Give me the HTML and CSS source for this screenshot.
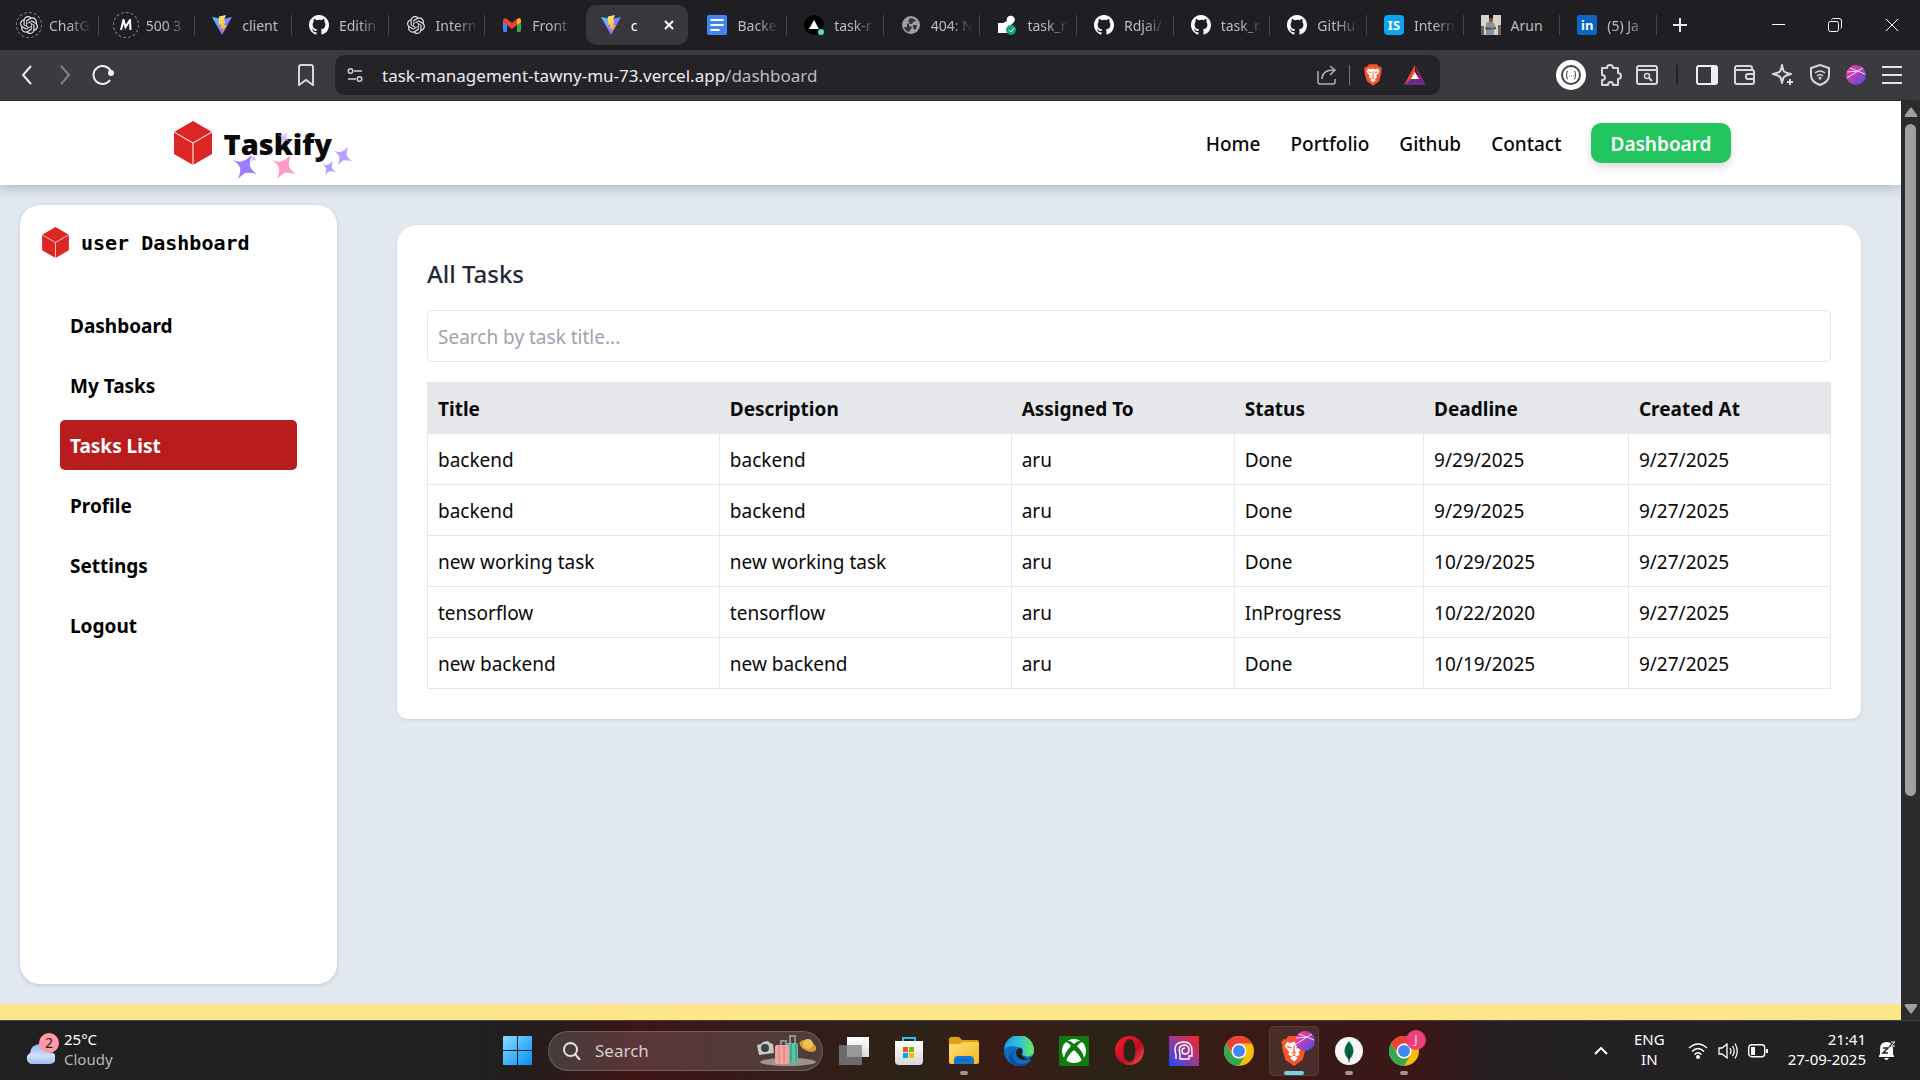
FILE: index.html
```html
<!DOCTYPE html>
<html lang="en">
<head>
<meta charset="utf-8">
<title>client</title>
<link rel="stylesheet" href="styles.css">
</head>
<body>
<svg class="defs" width="0" height="0" aria-hidden="true">
  <defs>
    <linearGradient id="g-vite" x1="0" y1="0" x2="1" y2="1"><stop offset="0" stop-color="#41d1ff"/><stop offset="1" stop-color="#bd34fe"/></linearGradient>
    <linearGradient id="g-bolt" x1="0" y1="0" x2="0" y2="1"><stop offset="0" stop-color="#ffea83"/><stop offset="1" stop-color="#ffa800"/></linearGradient>
    <linearGradient id="g-orb" x1="0" y1="0" x2="1" y2="1"><stop offset="0" stop-color="#ff3d9a"/><stop offset=".5" stop-color="#b040b8"/><stop offset="1" stop-color="#3a50e8"/></linearGradient>
    <linearGradient id="g-win" x1="0" y1="0" x2="1" y2="1"><stop offset="0" stop-color="#7fe0ff"/><stop offset="1" stop-color="#0a8cf5"/></linearGradient>
    <linearGradient id="g-cloud" x1="0" y1="0" x2="0" y2="1"><stop offset="0" stop-color="#8fb4ee"/><stop offset=".6" stop-color="#cfe0fa"/><stop offset="1" stop-color="#9dbcf2"/></linearGradient>
    <linearGradient id="g-folder" x1="0" y1="0" x2="1" y2="1"><stop offset="0" stop-color="#ffdf75"/><stop offset="1" stop-color="#f7b81c"/></linearGradient>
    <linearGradient id="g-edge" x1="0" y1="0" x2="1" y2="0"><stop offset="0" stop-color="#1b9de2"/><stop offset=".5" stop-color="#30c0d8"/><stop offset="1" stop-color="#6ce85c"/></linearGradient>
    <linearGradient id="g-opera" x1="0" y1="0" x2="1" y2="1"><stop offset="0" stop-color="#ff1b2d"/><stop offset=".6" stop-color="#c00d20"/><stop offset="1" stop-color="#ff5a5a"/></linearGradient>
    <linearGradient id="g-head" x1="0" y1="1" x2="1" y2="0"><stop offset="0" stop-color="#1f49ff"/><stop offset=".5" stop-color="#9a3a9a"/><stop offset="1" stop-color="#ff2020"/></linearGradient>
    <linearGradient id="g-grey" x1="0" y1="0" x2="0" y2="1"><stop offset="0" stop-color="#fff"/><stop offset="1" stop-color="#d8d8d8"/></linearGradient>
    <symbol id="vite" viewBox="0 0 20 20"><path fill="url(#g-vite)" d="M0 2 10 20 20 2 11 4z"/><path fill="url(#g-bolt)" d="M14 0 7 1.5 6.500 10l3-.6-1 4.600 3-1-1.500 5 5-8-3 .6 1.500-5-2 .4z"/></symbol>
    <symbol id="github" viewBox="0 0 16 16"><path fill="#fff" d="M8 0C3.580 0 0 3.580 0 8c0 3.540 2.290 6.530 5.470 7.590.4.070.550-.170.550-.380 0-.190-.010-.820-.010-1.490-2.010.370-2.530-.490-2.690-.940-.090-.230-.480-.940-.820-1.130-.280-.150-.680-.520-.010-.530.630-.010 1.080.580 1.230.820.720 1.210 1.870.870 2.330.660.070-.520.280-.870.510-1.070-1.780-.2-3.640-.890-3.640-3.950 0-.870.310-1.590.820-2.150-.080-.2-.360-1.020.080-2.120 0 0 .670-.210 2.200.820A7.600 7.600 0 0 1 8 3.860c.680 0 1.360.090 2 .270 1.530-1.040 2.200-.820 2.200-.820.440 1.100.160 1.920.080 2.120.510.560.820 1.270.820 2.150 0 3.070-1.870 3.750-3.650 3.950.290.250.540.730.540 1.480 0 1.070-.010 1.930-.010 2.200 0 .210.150.460.550.380A8 8 0 0 0 16 8c0-4.420-3.580-8-8-8z"/></symbol>
    <symbol id="knot" viewBox="0 0 24 24"><path fill="#e4e4e6" d="M22.282 9.821a5.985 5.985 0 0 0-.516-4.911 6.046 6.046 0 0 0-6.510-2.900A6.065 6.065 0 0 0 4.981 4.182a5.985 5.985 0 0 0-3.998 2.900 6.046 6.046 0 0 0 .743 7.097 5.980 5.980 0 0 0 .511 4.911 6.051 6.051 0 0 0 6.515 2.900A5.985 5.985 0 0 0 13.260 24a6.056 6.056 0 0 0 5.772-4.206 5.990 5.990 0 0 0 3.998-2.900 6.056 6.056 0 0 0-.747-7.073zM13.260 22.430a4.476 4.476 0 0 1-2.876-1.041l.142-.080 4.778-2.758a.795.795 0 0 0 .393-.681v-6.737l2.020 1.169a.071.071 0 0 1 .038.052v5.583a4.504 4.504 0 0 1-4.495 4.493zM3.600 18.304a4.471 4.471 0 0 1-.535-3.014l.142.085 4.783 2.759a.771.771 0 0 0 .781 0l5.843-3.369v2.332a.080.080 0 0 1-.033.062L9.740 19.950a4.500 4.500 0 0 1-6.140-1.646zM2.341 7.896a4.485 4.485 0 0 1 2.366-1.973V11.600a.766.766 0 0 0 .388.677l5.815 3.354-2.020 1.169a.076.076 0 0 1-.071 0l-4.830-2.787A4.504 4.504 0 0 1 2.341 7.872zm16.597 3.855-5.833-3.387L15.119 7.200a.076.076 0 0 1 .071 0l4.830 2.791a4.494 4.494 0 0 1-.676 8.105v-5.678a.790.790 0 0 0-.407-.667zm2.011-3.023-.142-.085-4.774-2.782a.776.776 0 0 0-.785 0L9.409 9.230V6.897a.066.066 0 0 1 .028-.062l4.830-2.787a4.499 4.499 0 0 1 6.680 4.660zM8.307 12.863l-2.020-1.164a.080.080 0 0 1-.038-.057V6.074a4.499 4.499 0 0 1 7.376-3.454l-.142.081-4.778 2.758a.795.795 0 0 0-.393.681zm1.097-2.365 2.602-1.500 2.607 1.500v2.999l-2.597 1.500-2.607-1.500z"/></symbol>
    <symbol id="cube" viewBox="0 0 38 44"><path fill="#dc2626" d="M19 0 38 11V33L19 44 0 33V11z"/><path d="M0 11 19 22 38 11M19 22V44" fill="none" stroke="#fff" stroke-width="1"/></symbol>
    <symbol id="star4" viewBox="0 0 24 24"><path d="M0 5Q7 8 10 6 15 4 19 0 16 8 17 11 18 15 24 19 15 17 12 18 9 20 5 24 8 16 7 13 6 9 0 5z"/></symbol>
    <symbol id="lion" viewBox="0 0 22 26"><path fill="#fb542b" d="M6 0h10l2 3 2-.500 2 3-1 3 .500 1-3 11-7.500 5.500L3.500 20.500.5 9.500 1 8.500l-1-3 2-3L4 3z"/><path fill="#fff" d="m5 5 3 1 3-1 3 1 3-1 2 4-4 5 1 2-3 2-2-3-2 3-3-2 1-2-4-5z"/><path fill="#fff" d="m7.500 19 3.500-2 3.500 2-3.500 3z"/><path stroke="#fb542b" stroke-width="1" fill="none" d="m5 9 4 1.500M17 9l-4 1.500M11 8v6l-2 1m2-1 2 1"/></symbol>
    <symbol id="chrome" viewBox="0 0 30 30"><circle cx="15" cy="15" r="15" fill="#fbbc05"/><path fill="#ea4335" d="M2 7.500A15 15 0 0 1 28 7.500H15l-6 11z"/><path fill="#34a853" d="M2 7.500A15 15 0 0 0 15 30l6.500-11.300A7.500 7.500 0 0 1 8.500 18.700z"/><circle cx="15" cy="15" r="7.500" fill="#fff"/><circle cx="15" cy="15" r="6" fill="#4285f4"/></symbol>
    <symbol id="orb" viewBox="0 0 20 20"><circle cx="10" cy="10" r="10" fill="url(#g-orb)"/><path d="M1 13 17 3M4 3l15 6M1 7l12-1" stroke="#ffd8f0" stroke-width="1" fill="none"/></symbol>
  </defs>
</svg>

<header class="tabbar">
  <div class="tabs">
    <a class="tab" href="#"><span class="fav ring"><svg width="18" height="18"><use href="#knot"/></svg></span><span class="tab-title">ChatG</span></a>
    <a class="tab" href="#"><span class="fav ring"><svg width="14" height="12" viewBox="0 0 14 12"><path d="M2 11 4.500 1 6.500 8 11 1 11.500 11" fill="none" stroke="#fff" stroke-width="2"/></svg></span><span class="tab-title">500 3</span></a>
    <a class="tab" href="#"><span class="fav"><svg width="20" height="20"><use href="#vite"/></svg></span><span class="tab-title plain">client</span></a>
    <a class="tab" href="#"><span class="fav"><svg width="20" height="20"><use href="#github"/></svg></span><span class="tab-title">Editin</span></a>
    <a class="tab" href="#"><span class="fav"><svg width="18" height="18"><use href="#knot"/></svg></span><span class="tab-title">Intern</span></a>
    <a class="tab before-active" href="#"><span class="fav"><svg width="18" height="14" viewBox="0 0 18 14"><path fill="#4285f4" d="M0 2h4v12H1L0 13z"/><path fill="#34a853" d="M14 2h4v11l-1 1h-3z"/><path fill="#ea4335" d="M0 2Q1-1 4 1l5 4 5-4q3-2 4 1v2L9 11 0 4z"/><path fill="#fbbc04" d="M14 1q4-2 4 2v1l-4 3z"/></svg></span><span class="tab-title">Front</span></a>
    <a class="tab active" href="#"><span class="fav"><svg width="20" height="20"><use href="#vite"/></svg></span><span class="tab-title plain">c</span><svg class="tab-x" width="10" height="10" viewBox="0 0 10 10"><path d="M1 1 9 9M9 1 1 9" stroke="#fff" stroke-width="2"/></svg></a>
    <a class="tab" href="#"><span class="fav"><svg width="20" height="20" viewBox="0 0 20 20"><rect width="20" height="20" rx="2" fill="#4285f4"/><path d="M3.500 5h13M3.500 10h13M3.500 15h9" stroke="#fff" stroke-width="2"/></svg></span><span class="tab-title">Backe</span></a>
    <a class="tab" href="#"><span class="fav"><svg width="20" height="20" viewBox="0 0 20 20"><circle cx="10" cy="10" r="10" fill="#000"/><path fill="#fff" d="M10 5 15 14H5z"/><circle cx="17" cy="17" r="3" fill="#4fe3c2"/></svg></span><span class="tab-title">task-r</span></a>
    <a class="tab" href="#"><span class="fav"><svg width="18" height="18" viewBox="0 0 18 18"><circle cx="9" cy="9" r="9" fill="#9aa0a6"/><path fill="#36363b" d="M8 2q4 0 6 3l-3 1-1 2-3 0 0 2 3 1-1 2-2 3q-4-1-5-5l3 0 0-3 3-1-2-2zM11 9h4q0 3-2 5l-2-2z"/></svg></span><span class="tab-title">404: N</span></a>
    <a class="tab" href="#"><span class="fav"><svg width="20" height="20" viewBox="0 0 20 20"><path fill="#fff" d="M1 8h5l4-2a4 4 0 1 1 7 1l-3 3-3 8H1z"/><circle cx="14" cy="15" r="5" fill="#10a37f"/><path d="m12 15 2 2 3-4" fill="none" stroke="#fff" stroke-width="1"/></svg></span><span class="tab-title">task_r</span></a>
    <a class="tab" href="#"><span class="fav"><svg width="20" height="20"><use href="#github"/></svg></span><span class="tab-title">Rdjai/</span></a>
    <a class="tab" href="#"><span class="fav"><svg width="20" height="20"><use href="#github"/></svg></span><span class="tab-title">task_r</span></a>
    <a class="tab" href="#"><span class="fav"><svg width="20" height="20"><use href="#github"/></svg></span><span class="tab-title">GitHu</span></a>
    <a class="tab" href="#"><span class="fav is">IS</span><span class="tab-title">Intern</span></a>
    <a class="tab" href="#"><span class="fav"><svg width="20" height="20" viewBox="0 0 20 20"><path fill="#d6d2c8" d="M0 0h20v20H0z"/><path fill="#6e6558" d="M0 11h3v9H0zM17 10h3v10h-3z"/><path fill="#7f97ab" d="m5 8 4-2 4 2 2 5-2 3v4H5z"/><path fill="#7a4c34" d="M8 2h4v4l-2 2-2-2zM4 12l8 1 3-1v2l-10 1z"/><path fill="#16120f" d="M8 0h4v3H8z"/></svg></span><span class="tab-title plain">Arun</span></a>
    <a class="tab" href="#"><span class="fav li">in</span><span class="tab-title">(5) Ja</span></a>
  </div>
  <button class="ib newtab" aria-label="New tab"><svg width="14" height="14" viewBox="0 0 14 14"><path d="M7 0V14M0 7H14" stroke="#e8e8ea" stroke-width="2"/></svg></button>
  <div class="winctl">
    <button class="ib" aria-label="Minimize"><svg width="14" height="14" viewBox="0 0 14 14"><path d="M1 6.500H14" stroke="#fff"/></svg></button>
    <button class="ib" aria-label="Restore"><svg width="14" height="14" viewBox="0 0 14 14"><rect x=".5" y="3.500" width="10" height="10" rx="2" fill="none" stroke="#fff"/><path d="M3.500 1.500Q4 .5 5.500.5H11q2.500 0 2.500 2.500v6q0 1-1 1.500" fill="none" stroke="#fff"/></svg></button>
    <button class="ib" aria-label="Close"><svg width="14" height="14" viewBox="0 0 14 14"><path d="M1 1 13 13M13 1 1 13" stroke="#fff"/></svg></button>
  </div>
</header>

<div class="toolbar">
  <div class="tgroup nav-btns">
    <button class="ib" aria-label="Back"><svg width="12" height="20" viewBox="0 0 12 20"><path d="M10 1 2 10l8 9" fill="none" stroke="#f0f0f2" stroke-width="2"/></svg></button>
    <button class="ib" aria-label="Forward"><svg width="12" height="20" viewBox="0 0 12 20"><path d="m2 1 8 9-8 9" fill="none" stroke="#818086" stroke-width="2"/></svg></button>
    <button class="ib" aria-label="Reload"><svg width="22" height="20" viewBox="0 0 22 20"><path d="M18 15A9 9 0 1 1 19 7" fill="none" stroke="#f0f0f2" stroke-width="2"/><circle cx="19" cy="8" r="3" fill="#f0f0f2"/></svg></button>
  </div>
  <button class="ib bookmark" aria-label="Bookmark"><svg width="16" height="22" viewBox="0 0 16 22"><path d="M1 3q0-2 2-2h10q2 0 2 2v18l-7-5-7 5z" fill="none" stroke="#d8d8da" stroke-width="2"/></svg></button>
  <div class="urlbar">
    <svg width="16" height="16" viewBox="0 0 16 16"><g fill="none" stroke="#d0d0d3" stroke-width="1.500"><circle cx="3.500" cy="4" r="2.300"/><path d="M7 4h8M1 12h8"/><circle cx="12.500" cy="12" r="2.300"/></g></svg>
    <div class="url" role="textbox" aria-label="Address">task-management-tawny-mu-73.vercel.app<span class="path">/dashboard</span></div>
    <svg width="20" height="20" viewBox="0 0 20 20"><path d="M1 6v11q0 2 2 2h13q2 0 2-2v-3M5 14q0-9 12-9M13 1l5 4-5 5" fill="none" stroke="#b0b0b4" stroke-width="1.500"/></svg>
    <span class="usep"></span>
    <svg class="brave" width="18" height="22"><use href="#lion"/></svg>
    <svg width="22" height="20" viewBox="0 0 22 20"><path fill="#ff4724" d="M11 0 0 20l11-6z"/><path fill="#9e1f63" d="m11 0 11 20-7-6z"/><path fill="#662d91" d="M0 20h22l-7-6H7z"/><path fill="#fff" d="m11 7 4 7H7z"/></svg>
  </div>
  <div class="tgroup ext">
    <span class="ext-round"><svg width="20" height="20" viewBox="0 0 20 20"><circle cx="10" cy="10" r="9" fill="none" stroke="#444" stroke-width="2"/><path d="M7 6q-2 0-1 3l-1 1 1 1q-1 3 1 3M13 6q2 0 1 3l1 1-1 1q1 3-1 3" fill="none" stroke="#444" stroke-width="1"/><path d="M8 11h1m1 0h1m1 0h1" stroke="#777"/></svg></span>
    <svg width="22" height="22" viewBox="0 0 22 22"><path d="M2 4h5q0-3 3-3t3 3h5v5q3 0 3 3t-3 3v6h-5q0-3-2.500-3T8 21H2v-5q3 0 3-2.500T2 11z" fill="none" stroke="#d8d8da" stroke-width="2" stroke-linejoin="round"/></svg>
    <svg width="22" height="20" viewBox="0 0 22 20"><rect x="1" y="1" width="20" height="18" rx="2" fill="none" stroke="#d8d8da" stroke-width="2"/><path d="M1 5h20M13 13l3 3" stroke="#d8d8da" stroke-width="2"/><circle cx="11" cy="11" r="2.500" fill="none" stroke="#d8d8da" stroke-width="1.500"/></svg>
  </div>
  <span class="tsep"></span>
  <div class="tgroup right">
    <svg width="22" height="20" viewBox="0 0 22 20"><rect x="1" y="1" width="20" height="18" rx="2" fill="none" stroke="#efeff0" stroke-width="2"/><path fill="#efeff0" d="M15 1h6v18h-6z"/></svg>
    <svg width="22" height="20" viewBox="0 0 22 20"><path d="M18 5V3q0-2-2-2H3Q1 1 1 3v14q0 2 2 2h15q2 0 2-2V7q0-2-2-2H2M20 9h-6q-2 0-2 2v1q0 2 2 2h6" fill="none" stroke="#d8d8da" stroke-width="2"/></svg>
    <svg width="22" height="22" viewBox="0 0 22 22"><path d="M10 1Q11 6 12 7.500 14 9 19 10 14 11 12 13 11 14 10 19 9 14 8 13 6 11 1 10 6 9 8 7.500 9 6 10 1zM18 15v6m-3-3h6" fill="none" stroke="#d8d8da" stroke-width="2" stroke-linejoin="round"/></svg>
    <svg width="20" height="22" viewBox="0 0 20 22"><path d="m10 1 9 3v7q0 7-9 10-9-3-9-10V4z" fill="none" stroke="#d8d8da" stroke-width="2"/><path d="M5 9q5-4 10 0M7 12q3-3 6 0" fill="none" stroke="#d8d8da" stroke-width="1.500"/><circle cx="10" cy="14" r="1.500" fill="#d8d8da"/></svg>
    <svg width="20" height="20"><use href="#orb"/></svg>
    <svg width="20" height="18" viewBox="0 0 20 18"><path d="M0 1h20M0 9h20M0 17h20" stroke="#e4e4e6" stroke-width="2"/></svg>
  </div>
</div>

<div class="viewport">
  <div class="page">
    <header class="site-nav">
      <div class="container">
        <a class="brand" href="#">
          <svg width="38" height="44"><use href="#cube"/></svg>
          <span class="brand-name">Taskify
            <svg class="stars" width="128" height="56" viewBox="0 0 128 56"><use href="#star4" x="9" y="32" width="24" height="24" fill="#9b7bff"/><use href="#star4" x="48" y="32" width="24" height="24" fill="#ff9ac6"/><use href="#star4" x="98" y="38" width="14" height="14" fill="#b8a0ff"/><use href="#star4" x="110" y="24" width="18" height="18" fill="#b8a0ff"/><use href="#star4" x="54" y="9" width="12" height="12" fill="#b8a0ff" opacity=".6"/><use href="#star4" x="26" y="32" width="7" height="7" fill="#d0c0ff"/></svg>
          </span>
        </a>
        <nav class="links">
          <a href="#">Home</a>
          <a href="#">Portfolio</a>
          <a href="#">Github</a>
          <a href="#">Contact</a>
          <button class="cta">Dashboard</button>
        </nav>
      </div>
    </header>
    <div class="layout">
      <aside class="sidebar">
        <div class="side-head"><svg width="27" height="31"><use href="#cube"/></svg><span>user Dashboard</span></div>
        <nav class="side-nav">
          <a href="#">Dashboard</a>
          <a href="#">My Tasks</a>
          <a class="current" href="#">Tasks List</a>
          <a href="#">Profile</a>
          <a href="#">Settings</a>
          <a href="#">Logout</a>
        </nav>
      </aside>
      <main class="card">
        <h2>All Tasks</h2>
        <input class="search" type="text" placeholder="Search by task title..." aria-label="Search by task title">
        <table>
          <colgroup><col class="c1"><col class="c2"><col class="c3"><col class="c4"><col class="c5"><col class="c6"></colgroup>
          <thead><tr><th>Title</th><th>Description</th><th>Assigned To</th><th>Status</th><th>Deadline</th><th>Created At</th></tr></thead>
          <tbody>
            <tr><td>backend</td><td>backend</td><td>aru</td><td>Done</td><td>9/29/2025</td><td>9/27/2025</td></tr>
            <tr><td>backend</td><td>backend</td><td>aru</td><td>Done</td><td>9/29/2025</td><td>9/27/2025</td></tr>
            <tr><td>new working task</td><td>new working task</td><td>aru</td><td>Done</td><td>10/29/2025</td><td>9/27/2025</td></tr>
            <tr><td>tensorflow</td><td>tensorflow</td><td>aru</td><td>InProgress</td><td>10/22/2020</td><td>9/27/2025</td></tr>
            <tr><td>new backend</td><td>new backend</td><td>aru</td><td>Done</td><td>10/19/2025</td><td>9/27/2025</td></tr>
          </tbody>
        </table>
      </main>
    </div>
    <footer class="strip"></footer>
  </div>
  <div class="scrollbar">
    <svg width="14" height="10" viewBox="0 0 14 10"><path d="M6 1q1-1 2 0l5 7q1 2-1 2H2Q0 10 1 8z" fill="#9f9f9f"/></svg>
    <div class="track"><div class="thumb"></div></div>
    <svg width="14" height="10" viewBox="0 0 14 10"><path d="M6 9q1 1 2 0l5-7q1-2-1-2H2Q0 0 1 2z" fill="#9f9f9f"/></svg>
  </div>
</div>

<footer class="taskbar">
  <div class="weather">
    <span class="cloud"><svg width="30" height="30" viewBox="0 0 30 30"><path fill="url(#g-cloud)" d="M6 30a6 6 0 0 1-1-11q1-8 9-9t11 8a6 6 0 0 1 0 12z"/></svg><span class="badge">2</span></span>
    <div><div class="temp">25°C</div><div class="cond">Cloudy</div></div>
  </div>
  <div class="dock">
    <button class="ib start" aria-label="Start"><svg width="29" height="29" viewBox="0 0 29 29"><path fill="url(#g-win)" d="M1 0h13v14H0V1q0-1 1-1zM15 0h13q1 0 1 1v13H15zM0 15h14v14H1q-1 0-1-1zM15 15h14v13q0 1-1 1H15z"/></svg></button>
    <button class="tsearch"><svg width="18" height="18" viewBox="0 0 18 18"><circle cx="7.500" cy="7.500" r="6.500" fill="none" stroke="#e8e4e4" stroke-width="2"/><path d="m12 12 5 6" stroke="#e8e4e4" stroke-width="2"/></svg><span>Search</span>
      <svg class="art" width="60" height="32" viewBox="0 0 60 32"><ellipse cx="32" cy="27" rx="28" ry="4" fill="#9b9490"/><path fill="#c9c9c9" d="m1 10 4-1 2-2 5-1 2 2 3 1 1 9-15 2z"/><circle cx="9" cy="13" r="4" fill="#3e4146"/><path d="M34 8V1h5v8M25 10V6h5v4" fill="none" stroke="#8f8f94" stroke-width="2"/><rect x="30" y="8" width="12" height="20" rx="2" fill="#5cc2a2"/><path d="M35 9v18M40 9v18" stroke="#2f8c74"/><rect x="19" y="10" width="14" height="19" rx="2" fill="#f4a3a0"/><path d="M23 11v17M28 11v17" stroke="#d07f80"/><ellipse cx="52" cy="11" rx="9" ry="5" fill="#d99a34" transform="rotate(25 52 11)"/><circle cx="52" cy="9" r="5" fill="#f0bf55"/></svg></button>
    <div class="apps">
      <a class="app" href="#" aria-label="Task view"><svg width="30" height="28" viewBox="0 0 30 28"><path fill="#6c6a6a" d="M0 8h23v20H0z"/><path fill="url(#g-grey)" d="M8 0h22v20H8z"/><path fill="#999" d="M8 8h15v12H8z"/></svg></a>
      <a class="app" href="#" aria-label="Store"><svg width="30" height="30" viewBox="0 0 30 30"><path d="M9 6V2h12v4" fill="none" stroke="#2fc0ee" stroke-width="2"/><path fill="url(#g-grey)" d="M1 5h28v20q0 4-4 4H5q-4 0-4-4z"/><path fill="#f25022" d="M9 11h5v5H9z"/><path fill="#7fba00" d="M15 11h5v5h-5z"/><path fill="#00a4ef" d="M9 17h5v5H9z"/><path fill="#ffb900" d="M15 17h5v5h-5z"/></svg></a>
      <a class="app run" href="#" aria-label="File Explorer"><svg width="30" height="28" viewBox="0 0 30 28"><path fill="#e0a010" d="M0 2q0-2 2-2h8l3 3h15q2 0 2 3v8H0z"/><path fill="url(#g-folder)" d="M0 7h11l3-2h14q2 0 2 2v18q0 2-2 2H2q-2 0-2-2z"/><path fill="#1277d4" d="M5 27v-4q0-4 4-4h12q4 0 4 4v4z"/><path d="M9 23h12" stroke="#0a4f9c"/></svg></a>
      <a class="app" href="#" aria-label="Edge"><svg width="30" height="30" viewBox="0 0 30 30"><circle cx="15" cy="15" r="15" fill="#0d6cc4"/><path fill="url(#g-edge)" d="M0 14A15 15 0 0 1 30 14q0 6-6 6.500-7 0-5-4 1-4-3-5T7 10Q2 11 0 14z"/><path fill="#0f4f9e" d="M12 14q-5 5-2 10 5 7 15 2-4 4-10 4-9-1-10-8 0-6 7-8z"/><path fill="#2b1a14" d="M16 12q-4 1-4 5 1 6 7 7 6 0 11-5v4l-3 0q-4 1-7-2-3-1-2-4 1-4-2-5z"/></svg></a>
      <a class="app" href="#" aria-label="Xbox"><svg width="30" height="30" viewBox="0 0 30 30"><rect width="30" height="30" rx="2" fill="#107c10"/><circle cx="15" cy="15" r="12" fill="#fff"/><path fill="#107c10" d="M7 5q4-1 8 3 4-4 8-3l1 1q-3 0-6 4 7 7 7 13l-2 2q-2-6-8-11-6 5-8 11l-2-2q0-6 7-13-3-4-6-4z"/></svg></a>
      <a class="app" href="#" aria-label="Opera"><svg width="29" height="29" viewBox="0 0 29 29"><path fill="url(#g-opera)" fill-rule="evenodd" d="M14.500 0a14.500 14.500 0 1 0 0 29 14.500 14.500 0 0 0 0-29zm0 3c4 0 6 5 6 11.500S18.500 26 14.500 26s-6-5-6-11.500S10.500 3 14.500 3z"/></svg></a>
      <a class="app" href="#" aria-label="Assistant"><svg width="30" height="30" viewBox="0 0 30 30"><path fill="url(#g-head)" d="M0 0h30v30H0z"/><path d="M7 23v-4q-4-13 8-13 8 0 8 9v5h-3v3h-9v-5q-3-8 4-9 5 0 5 5 0 4-4 4-3 0-3-3t3-3" fill="none" stroke="#fff" stroke-width="1.400"/></svg></a>
      <a class="app" href="#" aria-label="Chrome"><svg width="30" height="30"><use href="#chrome"/></svg></a>
      <a class="app run focus" href="#" aria-label="Brave"><svg width="26" height="30"><use href="#lion"/></svg><svg class="over" width="20" height="20"><use href="#orb"/></svg></a>
      <a class="app run" href="#" aria-label="MongoDB Compass"><svg width="28" height="28" viewBox="0 0 28 28"><circle cx="14" cy="14" r="14" fill="#f6f6f4"/><path fill="#00684a" d="M14 4q5 6 4.500 11-.5 4-4.500 8-4-4-4.500-8Q9 10 14 4z"/><path d="M14 12v13" stroke="#023430"/></svg></a>
      <a class="app run" href="#" aria-label="Chrome, second profile"><svg width="30" height="30"><use href="#chrome"/></svg><span class="over jbadge">J</span></a>
    </div>
  </div>
  <div class="tray">
    <button class="ib chev" aria-label="Show hidden icons"><svg width="14" height="8" viewBox="0 0 14 8"><path d="m1 7 6-6 6 6" fill="none" stroke="#fff" stroke-width="2"/></svg></button>
    <div class="lang">ENG<br>IN</div>
    <div class="status">
      <svg width="20" height="16" viewBox="0 0 20 16"><path d="M1 5Q10-3 19 5M4 8.500q6-6 12 0M6.500 11.500q3.500-3.500 7 0" fill="none" stroke="#fff" stroke-width="1.500"/><circle cx="10" cy="14" r="2" fill="#fff"/></svg>
      <svg width="20" height="18" viewBox="0 0 20 18"><path d="M1 6h3l5-4v14l-5-4H1zM12 6q2 3 0 6M14.500 4q3.500 5 0 10M17 1.500q4.500 7.500 0 15" fill="none" stroke="#fff" stroke-width="1.300"/></svg>
      <svg width="20" height="14" viewBox="0 0 20 14"><rect x=".7" y=".7" width="16" height="12" rx="3" fill="none" stroke="#fff" stroke-width="1.400"/><path fill="#fff" d="M3 3h4v8H3zM18 5h2v4h-2z"/></svg>
    </div>
    <div class="clock">21:41<br>27-09-2025</div>
    <svg width="18" height="20" viewBox="0 0 18 20"><path fill="#fff" d="M1 15 2 13V8q0-7 7-7 6 0 6 7v5l1 2v1H1zM6 17h5q-2.500 4-5 0z"/><path d="M5 7h5l-5 5h5M12 1h4l-4 4h4" stroke="#222" fill="none" stroke-width="1.500"/><path d="M13 1h4l-4 4h4" stroke="#fff" fill="none"/></svg>
  </div>
</footer>
</body>
</html>
```
FILE: styles.css
```css
* { box-sizing: border-box; }
body {
  margin: 0;
  height: 100vh;
  display: flex;
  flex-direction: column;
  overflow: hidden;
  font-family: "Noto Sans", "Open Sans", sans-serif;
  color: #0a0a0a;
}
svg { display: block; flex: none; }
.defs { position: absolute; }
a { color: inherit; text-decoration: none; }
button { font: inherit; color: inherit; }
.ib { background: none; border: 0; padding: 0; display: grid; place-items: center; }

/* Tab strip */
.tabbar { height: 50px; flex: none; display: flex; background: #1f1e23; padding-left: 2px; }
.tabs { display: flex; flex: 0 1 1655px; min-width: 0; }
.tab {
  flex: 1 1 0;
  min-width: 0;
  display: flex;
  align-items: center;
  gap: 7px;
  padding: 0 6px 0 14px;
  color: #bcbcc0;
  font-size: 14px;
  position: relative;
}
.tab::after { content: ""; position: absolute; right: 0; top: 15px; height: 20px; width: 1px; background: #47464c; }
.tab.active::after, .tab.before-active::after { display: none; }
.fav { width: 26px; height: 26px; flex: none; display: grid; place-items: center; }
.ring { border: 1px dashed #8a8a90; border-radius: 50%; }
.fav.is, .fav.li { width: 20px; height: 20px; margin: 0 3px; color: #fff; font-size: 13px; font-weight: 700; line-height: 20px; }
.fav.is { background: #0aa5ee; border-radius: 4px; }
.fav.li { background: #0a66c2; border-radius: 2px; }
.tab-title {
  flex: 1;
  white-space: nowrap;
  mask-image: linear-gradient(to right, #000 20px, transparent 42px);
}
.tab-title.plain { mask-image: none; }
.tab.active { padding: 0 16px; color: #fff; isolation: isolate; }
.tab.active::before { content: ""; position: absolute; inset: 5px 2px 5px 4px; border-radius: 10px; background: #38373c; z-index: -1; }
.newtab { width: 46px; }
.winctl { margin-left: auto; display: flex; }
.winctl .ib { width: 57px; }

/* Toolbar */
.toolbar { height: 51px; flex: none; display: flex; align-items: center; background: #3b3a3f; border-bottom: 1px solid #302c38; padding-right: 18px; }
.tgroup { display: flex; align-items: center; }
.nav-btns { padding-left: 8px; }
.nav-btns .ib { width: 38px; }
.bookmark { margin-left: 175px; width: 18px; }
.urlbar {
  flex: 0 1 1105px;
  height: 40px;
  margin-left: 20px;
  border-radius: 10px;
  background: #242328;
  display: flex;
  align-items: center;
  padding: 0 14px 0 12px;
}
.url { flex: 1; margin-left: 19px; color: #ececee; font-size: 17px; white-space: nowrap; }
.path { color: #bdbdc2; }
.usep { width: 1px; height: 20px; background: #77767c; margin: 0 14px 0 12px; }
.brave { margin-right: 22px; }
.ext { margin-left: auto; gap: 14px; }
.ext-round { width: 30px; height: 30px; border-radius: 50%; background: #fff; display: grid; place-items: center; }
.tsep { width: 2px; height: 20px; background: #232228; margin: 0 18px; }
.right { gap: 16px; }

/* Page */
.viewport { flex: 1; min-height: 0; display: flex; }
.page { flex: 1; min-width: 0; display: flex; flex-direction: column; background: #e1e8f0; }
.site-nav { background: #fff; box-shadow: 0 4px 12px rgba(0, 0, 0, .2); height: 84px; flex: none; }
.container { max-width: 1560px; height: 100%; margin: 0 auto; padding-left: 3px; display: flex; align-items: center; justify-content: space-between; }
.brand { display: flex; align-items: center; gap: 12px; }
.brand-name { position: relative; font-family: "Open Sans", sans-serif; font-weight: 800; font-size: 29px; line-height: 44px; padding-top: 2px; }
.stars { position: absolute; left: 0; top: 3px; }
.links { display: flex; align-items: center; gap: 30px; font-size: 19px; font-weight: 500; line-height: 24px; }
.links a { padding-top: 2px; }
.cta { height: 40px; border: 0; border-radius: 10px; padding: 2px 19px 0; background: #22c55e; color: #fff; font-weight: 600; box-shadow: 0 4px 8px rgba(0, 0, 0, .15); }
.layout { flex: 1; display: flex; align-items: flex-start; padding: 20px 40px 20px 20px; gap: 60px; }
.sidebar { flex: 0 0 317px; align-self: stretch; background: #fff; border-radius: 20px; box-shadow: 0 1px 4px rgba(0, 0, 0, .15); padding: 20px 40px; }
.side-head { display: flex; align-items: center; gap: 12px; margin-left: -18px; font: 700 20px/32px "DejaVu Sans Mono", monospace; white-space: nowrap; color: #000; }
.side-head span { padding-top: 2px; }
.side-nav { margin-top: 41px; display: flex; flex-direction: column; gap: 10px; }
.side-nav a { padding: 2px 10px 0; line-height: 48px; border-radius: 5px; font-size: 19px; font-weight: 700; color: #000; }
.side-nav a.current { background: #b91c1c; color: #fff; }
.card { flex: 1; min-width: 0; margin-top: 20px; background: #fff; border-radius: 20px 20px 10px 10px; padding: 30px; box-shadow: 0 1px 3px rgba(0, 0, 0, .1); }
.card h2 { margin: 0 0 17px; font-size: 24px; line-height: 38px; font-weight: 500; color: #1f2937; }
.search { display: block; width: 100%; height: 52px; border: 1px solid #e5e7eb; border-radius: 5px; padding: 2px 10px 0; font: 400 19px/24px "Noto Sans", sans-serif; margin-bottom: 20px; }
.search::placeholder { color: #9ca3af; }
table { width: 100%; border-collapse: collapse; table-layout: fixed; font-size: 19px; }
th, td { border: 1px solid #e5e7eb; height: 51px; padding: 2px 10px 0; line-height: 24px; text-align: left; }
th { background: #e5e7eb; font-weight: 700; }
.c1, .c2 { width: 20.8%; }
.c3 { width: 15.9%; }
.c4 { width: 13.5%; }
.c5 { width: 14.6%; }
.strip { height: 16px; flex: none; background: #fde68a; }

.scrollbar { width: 19px; flex: none; background: #2c2c2c; display: flex; flex-direction: column; align-items: center; padding: 6px 0; }
.track { flex: 1; padding: 7px 0; }
.thumb { width: 11px; height: 77%; border-radius: 6px; background: #9f9f9f; }

/* Taskbar */
.taskbar {
  height: 60px;
  flex: none;
  display: grid;
  grid-template-columns: 1fr auto 1fr;
  align-items: center;
  border-top: 1px solid #444;
  color: #fff;
  font-size: 15px;
  line-height: 20px;
  background: linear-gradient(to right, #202020 25%, #2a1b1b 29%, #401516 33%, #37191a 38%, #2c2317 48%, #3a1b15 52%, #2b2416 58%, #391b15 65%, #391818 70%, #3d1617 74%, #242024 78%, #222 100%);
}
.weather { display: flex; align-items: center; gap: 9px; padding: 0 0 4px 25px; }
.cloud { position: relative; height: 30px; }
.badge { position: absolute; left: 14px; top: -1px; width: 20px; height: 20px; border-radius: 50%; background: #ff99a4; color: #222; text-align: center; font-size: 14px; }
.cond { color: #b8b8b8; }
.dock { display: flex; align-items: center; padding-left: 12px; }
.start { width: 29px; margin-right: 16px; }
.tsearch { width: 275px; height: 40px; border: 1px solid rgba(255, 255, 255, .18); border-radius: 20px; background: rgba(255, 255, 255, .14); display: flex; align-items: center; gap: 14px; padding: 0 6px 0 14px; font-size: 17px; color: #d4cfce; }
.art { margin-left: auto; }
.apps { display: flex; gap: 5px; margin-left: 6px; }
.app { position: relative; width: 50px; height: 50px; border-radius: 5px; display: grid; place-items: center; }
.app.run::after { content: ""; position: absolute; bottom: 1px; left: 21px; width: 8px; height: 4px; border-radius: 2px; background: #a09494; }
.app.focus { background: rgba(255, 255, 255, .09); border: 1px solid rgba(255, 255, 255, .08); }
.app.focus::after { left: 14px; bottom: 0; width: 20px; background: #76d3dc; }
.over { position: absolute; right: 3px; top: 4px; width: 20px; height: 20px; }
.jbadge { border-radius: 50%; background: #ec407a; color: #ffd5e3; text-align: center; font-size: 12px; }
.tray { display: flex; align-items: center; justify-content: flex-end; padding-right: 24px; }
.chev { margin-right: 26px; }
.lang { text-align: center; margin-right: 23px; padding-bottom: 4px; }
.status { display: flex; align-items: center; gap: 10px; margin-right: 20px; }
.clock { text-align: right; margin-right: 12px; padding-bottom: 4px; }
```
